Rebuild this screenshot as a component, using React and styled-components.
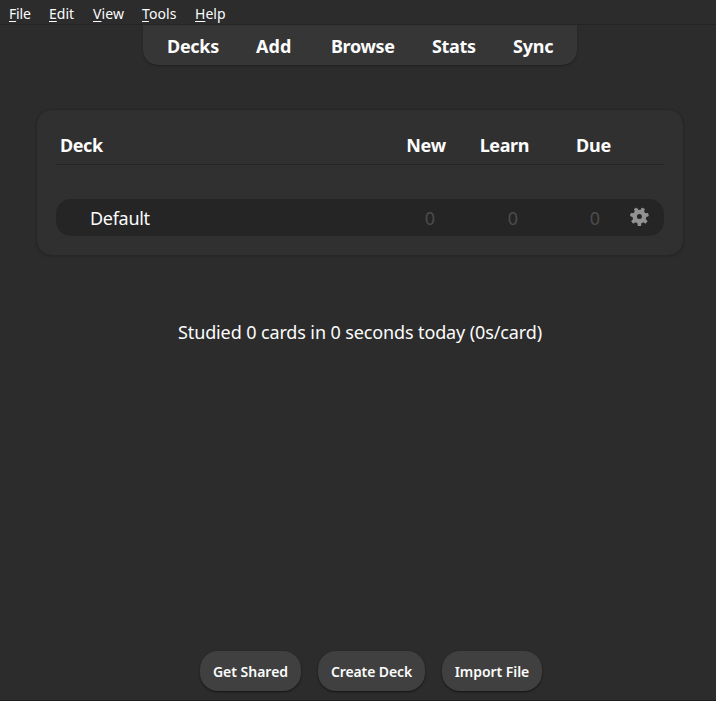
import React from "react";
import styled, { createGlobalStyle } from "styled-components";

const Global = createGlobalStyle`
  * { box-sizing: border-box; }
  body {
    margin: 0;
    background: #2c2c2c;
    color: #fcfcfc;
    font-family: "Noto Sans", "Open Sans", sans-serif;
    overflow: hidden;
  }
`;

const Window = styled.div`
  display: flex;
  flex-direction: column;
  width: 716px;
  height: 701px;
  border-bottom: 1px solid #1e1e1e;
`;

const MenuBar = styled.nav`
  display: flex;
  flex: none;
  height: 25px;
  padding-left: 9px;
  border-bottom: 1px solid #252525;
  font-size: 14px;
  line-height: 27px;
`;

const MenuItem = styled.span`
  flex: none;
  width: ${(p) => p.$width}px;
  letter-spacing: ${(p) => p.$spacing}px;
  white-space: nowrap;
`;

const Mnemonic = styled.span`
  text-decoration: underline;
  text-decoration-thickness: 1px;
  text-underline-offset: 2px;
  text-decoration-skip-ink: none;
`;

const Toolbar = styled.div`
  display: flex;
  flex: none;
  gap: 37px;
  width: 434px;
  height: 40px;
  margin-left: 143px;
  padding-left: 24px;
  background: #363636;
  border-radius: 0 0 15px 15px;
  box-shadow: 0 1px 2px #202020;
  clip-path: inset(0 -4px -4px -4px);
`;

const ToolLink = styled.span`
  flex: none;
  width: ${(p) => p.$width}px;
  font-size: 18px;
  font-weight: 700;
  line-height: 42px;
  letter-spacing: ${(p) => p.$spacing}px;
  white-space: nowrap;
`;

const DeckCard = styled.section`
  flex: none;
  width: 648px;
  height: 147px;
  margin: 44px 0 0 36px;
  padding: 15px 19px;
  background: #303030;
  border: 1px solid #272727;
  border-radius: 16px;
  box-shadow: 0 1px 2px #262626;
`;

const Row = styled.div`
  display: grid;
  grid-template-columns: 1fr 82px 83px 82px 51px;
  font-size: 18px;
`;

const HeaderRow = styled(Row)`
  height: 40px;
  border-bottom: 1px solid #252525;
  font-weight: 700;
  line-height: 40px;
`;

const DeckRow = styled(Row)`
  height: 37px;
  margin-top: 34px;
  background: #252525;
  border-radius: 15px;
  line-height: 38px;
`;

const Name = styled.span`
  padding-left: ${(p) => p.$indent}px;
  letter-spacing: ${(p) => p.$spacing}px;
`;

const Count = styled.span`
  padding-right: 2px;
  text-align: right;
  letter-spacing: ${(p) => p.$spacing || 0}px;
  white-space: nowrap;
`;

const ZeroCount = styled(Count)`
  padding-right: 13px;
  color: #4c4c4c;
`;

const Options = styled.span`
  display: flex;
  padding: 8px 0 0 16px;
`;

const Studied = styled.p`
  flex: none;
  width: 364px;
  margin: 62px 0 0 178px;
  font-size: 18px;
  line-height: 28px;
  letter-spacing: -0.12px;
  white-space: nowrap;
`;

const Footer = styled.footer`
  display: flex;
  gap: 17px;
  margin: auto 0 9px 200px;
`;

const Button = styled.button`
  width: ${(p) => p.$width}px;
  height: 40px;
  padding: 0;
  border: 0;
  border-radius: 18px;
  background: #404040;
  box-shadow: 0 1px 2px #141414;
  color: #fcfcfc;
  font: 600 14px/41px "Noto Sans", "Open Sans", sans-serif;
  letter-spacing: ${(p) => p.$spacing}px;
  white-space: nowrap;
`;

const menus = [
  ["File", 40, -0.2],
  ["Edit", 44, 0],
  ["View", 49, 0.1],
  ["Tools", 53, 0.1],
  ["Help", 40, 0],
];
const links = [
  ["Decks", 52, -0.3],
  ["Add", 38, 0.1],
  ["Browse", 64, -0.35],
  ["Stats", 44, -0.35],
  ["Sync", 42, -0.25],
];
const actions = [
  ["Get Shared", 101, 0],
  ["Create Deck", 107, -0.1],
  ["Import File", 100, -0.05],
];
const teeth = [0, 1, 2, 3, 4, 5, 6];

function Gear() {
  return (
    <svg width="20" height="20" viewBox="-10.4 -9.6 20 20" fill="#929292">
      <circle r="4.7" fill="none" stroke="#929292" strokeWidth="4.4" />
      {teeth.map((n) => (
        <path
          key={n}
          d="M-2.1 5.5 L-1.7 8.8 Q-1.6 9.3 -1.1 9.3 H1.1 Q1.6 9.3 1.7 8.8 L2.1 5.5 Z"
          transform={`rotate(${(n * 360) / 7})`}
        />
      ))}
    </svg>
  );
}

export default function App() {
  return (
    <Window>
      <Global />
      <MenuBar>
        {menus.map(([label, width, spacing]) => (
          <MenuItem key={label} $width={width} $spacing={spacing}>
            <Mnemonic>{label[0]}</Mnemonic>
            {label.slice(1)}
          </MenuItem>
        ))}
      </MenuBar>
      <Toolbar>
        {links.map(([label, width, spacing]) => (
          <ToolLink key={label} $width={width} $spacing={spacing}>
            {label}
          </ToolLink>
        ))}
      </Toolbar>
      <DeckCard>
        <HeaderRow>
          <Name $indent={4} $spacing={-0.4}>Deck</Name>
          <Count $spacing={-0.2}>New</Count>
          <Count $spacing={-0.4}>Learn</Count>
          <Count $spacing={-0.2}>Due</Count>
        </HeaderRow>
        <DeckRow>
          <Name $indent={34} $spacing={-0.3}>Default</Name>
          <ZeroCount>0</ZeroCount>
          <ZeroCount>0</ZeroCount>
          <ZeroCount>0</ZeroCount>
          <Options>
            <Gear />
          </Options>
        </DeckRow>
      </DeckCard>
      <Studied>Studied 0 cards in 0 seconds today (0s/card)</Studied>
      <Footer>
        {actions.map(([label, width, spacing]) => (
          <Button key={label} $width={width} $spacing={spacing}>
            {label}
          </Button>
        ))}
      </Footer>
    </Window>
  );
}
